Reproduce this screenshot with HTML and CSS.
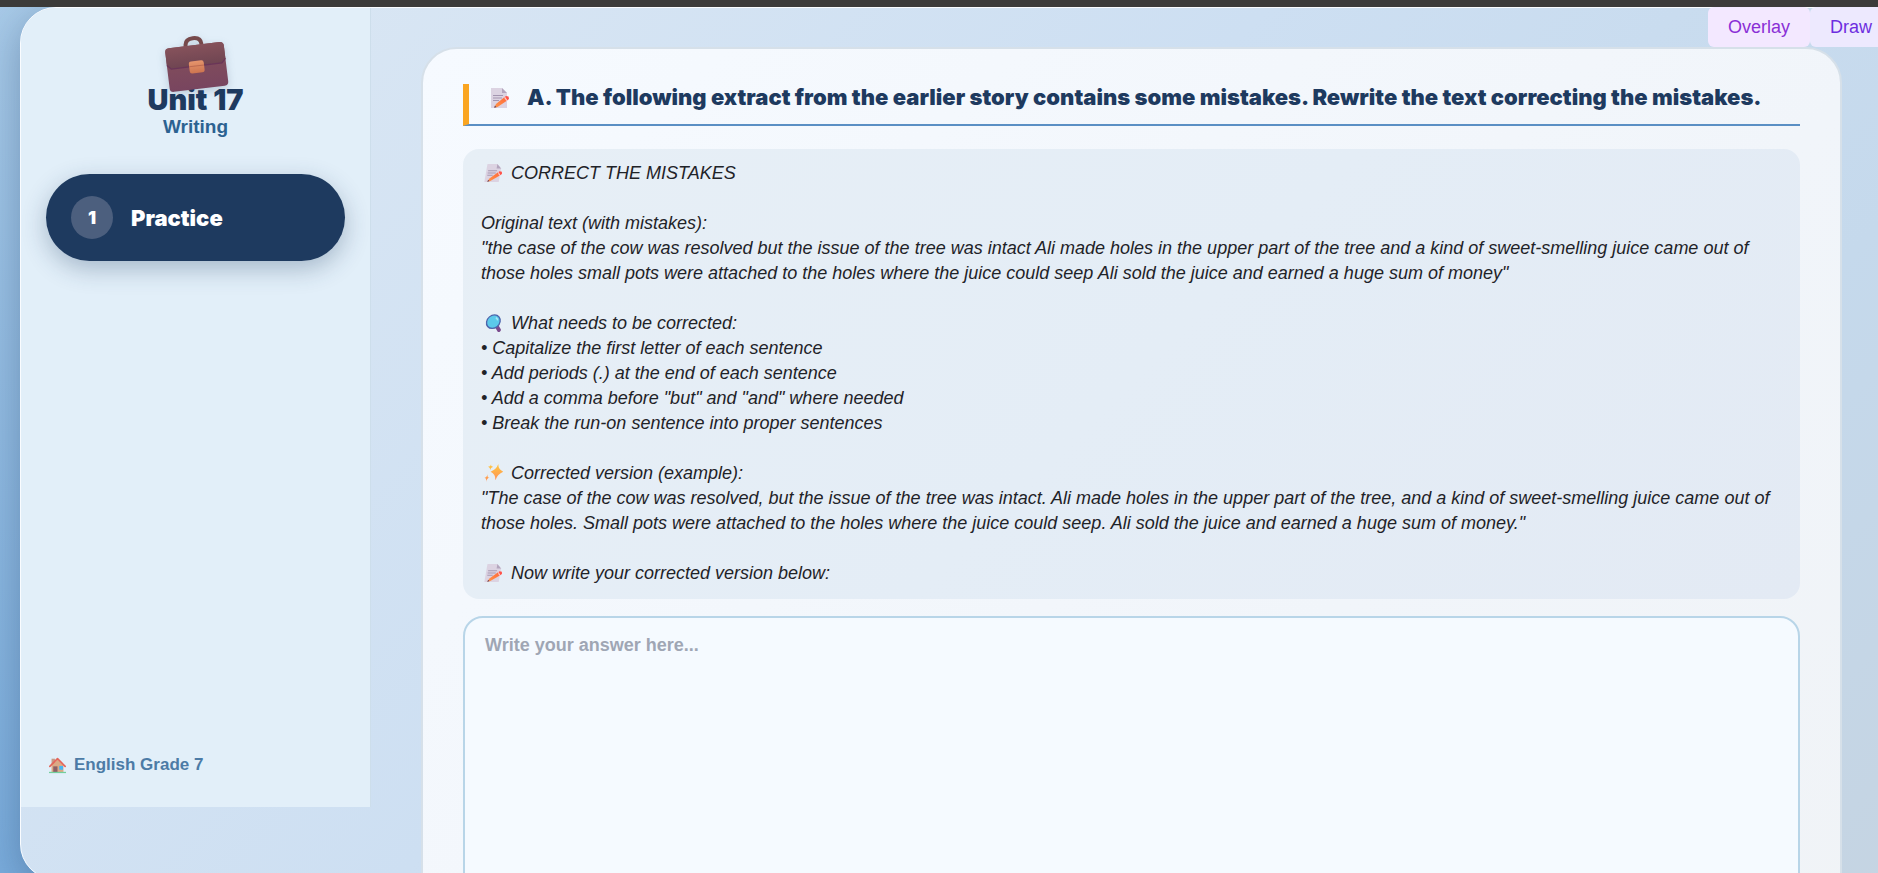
FILE: index.html
```html
<!DOCTYPE html>
<html lang="en">
  <head>
    <meta charset="UTF-8">
    <meta name="viewport" content="width=device-width, initial-scale=1">
    <title>Unit 17 - Writing</title>
    <link rel="stylesheet" href="styles.css">
  </head>
  <body>
    <!-- shared icons -->
    <svg class="defs" width="0" height="0" aria-hidden="true">
      <defs>
        <linearGradient id="flap" x1="0" y1="0" x2="0" y2="1">
          <stop offset="0" stop-color="#86525b"/>
          <stop offset="1" stop-color="#6f4552"/>
        </linearGradient>
        <linearGradient id="case" x1="0" y1="0" x2="0" y2="1">
          <stop offset="0" stop-color="#85505a"/>
          <stop offset="1" stop-color="#78455f"/>
        </linearGradient>
        <linearGradient id="clasp" x1="0" y1="0" x2="0" y2="1">
          <stop offset="0" stop-color="#e5946c"/>
          <stop offset="1" stop-color="#cd7550"/>
        </linearGradient>
        <linearGradient id="star" x1="0" y1="0" x2="0" y2="1">
          <stop offset="0" stop-color="#ffc840"/>
          <stop offset="1" stop-color="#ff9258"/>
        </linearGradient>
        <linearGradient id="pen" x1="1" y1="0" x2="0" y2="1">
          <stop offset="0" stop-color="#ff6a3c"/>
          <stop offset="1" stop-color="#ff9648"/>
        </linearGradient>
        <symbol id="memo" viewBox="0 0 18 20">
          <path fill="#dcd3e2" d="M0 0h11l5 5v15H0z"/>
          <path fill="#b3a5bd" d="M11 0l5 5h-5z"/>
          <path stroke="#a395b0" d="M2 7.500h10M2 10h9M2 12.500h6"/>
          <path fill="url(#pen)" d="M13 9.500l2.500 3.500-9 6-3 .5 1.500-3.500z"/>
          <path fill="#ff5148" d="M13 9.500l2-1.500 2.500.5.500 2.500-2.500 2z"/>
          <path fill="#ffd3c4" d="M13.200 9.400l.8-.6 2.300 3.500-.8.700z"/>
          <path fill="#6d4252" d="M4 17.500l1.500 1.800-2.500.5z"/>
        </symbol>
        <symbol id="lens" viewBox="0 0 20 20">
          <path stroke="#7b4a8d" stroke-width="4" stroke-linecap="round" d="M14 14l3 4"/>
          <circle cx="9" cy="8.500" r="7.500" fill="#5bc9ea" stroke="#4c65ac" stroke-width="1.500"/>
          <path fill="none" stroke="#a8e8f6" stroke-width="1.500" d="M11 4q2 1 2.500 3"/>
        </symbol>
        <symbol id="sparkles" viewBox="0 0 20 20">
          <path fill="url(#star)" d="M13 0q1 6 7 8.500-6 2.500-7 9.500-1-7-7-9.500 6-2.500 7-8.500z"/>
          <path fill="url(#star)" d="M5 0q0 3 3 3-3 1-3 4 0-3-3-4 3 0 3-3zM3 11q0 4 3 4-3 1-3 5 0-4-3-5 3 0 3-4z"/>
        </symbol>
        <symbol id="house" viewBox="0 0 20 18">
          <path fill="#c79a86" d="M3 1h4v7H3z"/>
          <path fill="#dba985" d="M3 9l7-7 7 7v8H3z"/>
          <path fill="none" stroke="#e4655a" stroke-width="2" stroke-linecap="round" stroke-linejoin="round" d="M1 10l9-9 9 9"/>
          <path fill="#8c6067" d="M5 10h5v7H5z"/>
          <path fill="#48b6f2" d="M12 9.500h4.500V14H12z"/>
          <path stroke="#72cf9c" stroke-width="1.500" d="M0 17.200h20"/>
        </symbol>
      </defs>
    </svg>

    <div class="app">
      <aside class="sidebar">
        <header class="unit">
          <svg class="briefcase" viewBox="0 0 68 60" aria-hidden="true">
            <g transform="rotate(-7 34 30)">
              <path fill="none" stroke="#76494b" stroke-width="4" d="M26 12v-2q0-7 8-7t8 7v2"/>
              <rect x="5" y="10" width="59" height="44" rx="4" fill="url(#case)"/>
              <path fill="url(#flap)" d="M9 10h51q4 0 4 4v13l-4 4H9l-4-4V14q0-4 4-4z"/>
              <path fill="none" stroke="#6a3558" stroke-width="1.200" d="M5 27l4 4h51l4-4"/>
              <rect x="27" y="26" width="15" height="12" rx="2.500" fill="url(#clasp)"/>
              <path stroke="#bd6a50" d="M27 31h15"/>
            </g>
          </svg>
          <h1>Unit 17</h1>
          <p>Writing</p>
        </header>
        <nav>
          <button type="button" class="nav-item">
            <span class="num">1</span>
            <span>Practice</span>
          </button>
        </nav>
        <a href="#" class="home">
          <svg aria-hidden="true"><use href="#house"/></svg>
          English Grade 7
        </a>
      </aside>

      <main>
        <section class="card">
          <h2><svg class="icon" aria-hidden="true"><use href="#memo"/></svg><span>A. The following extract from the earlier story contains some mistakes. Rewrite the text correcting the mistakes.</span></h2>

          <div class="passage">
            <p><svg class="icon" aria-hidden="true"><use href="#memo"/></svg>CORRECT THE MISTAKES</p>
            <p>Original text (with mistakes):<br>
            "the case of the cow was resolved but the issue of the tree was intact Ali made holes in the upper part of the tree and a kind of sweet-smelling juice came out of those holes small pots were attached to the holes where the juice could seep Ali sold the juice and earned a huge sum of money"</p>
            <p><svg class="icon" aria-hidden="true"><use href="#lens"/></svg>What needs to be corrected:<br>
            • Capitalize the first letter of each sentence<br>
            • Add periods (.) at the end of each sentence<br>
            • Add a comma before "but" and "and" where needed<br>
            • Break the run-on sentence into proper sentences</p>
            <p><svg class="icon" aria-hidden="true"><use href="#sparkles"/></svg>Corrected version (example):<br>
            "The case of the cow was resolved, but the issue of the tree was intact. Ali made holes in the upper part of the tree, and a kind of sweet-smelling juice came out of those holes. Small pots were attached to the holes where the juice could seep. Ali sold the juice and earned a huge sum of money."</p>
            <p><svg class="icon" aria-hidden="true"><use href="#memo"/></svg><label for="answer">Now write your corrected version below:</label></p>
          </div>

          <textarea id="answer" rows="16" placeholder="Write your answer here..."></textarea>
        </section>
      </main>
    </div>

    <div class="tools">
      <button type="button" class="overlay">Overlay</button>
      <button type="button" class="draw">Draw</button>
    </div>
  </body>
</html>
```
FILE: styles.css
```css
* {
  box-sizing: border-box;
}
body {
  margin: 0;
  height: 100vh;
  overflow: hidden;
  border-top: 7px solid #3c3b3a;
  background: linear-gradient(180deg, #a8cae8, #7aacdc);
  color: #1f2328;
  font-family: 'Liberation Sans', Arial, sans-serif;
  font-size: 18px;
}
h1, h2, p {
  margin: 0;
}
button {
  border: 0;
  font: inherit;
  cursor: pointer;
}
.defs {
  position: absolute;
}

/* the panel runs past the right edge of the window */
.app {
  display: flex;
  align-items: flex-start;
  height: 100vh;
  margin: 0 -40px 0 20px;
  border: 1px solid #fafcff;
  border-radius: 36px;
  background: linear-gradient(135deg, #dce8f4, #cddff2 45%, #c5d9ec 75%, #c5d4e2);
  box-shadow: 0 10px 40px rgba(30, 58, 95, .35);
}

.sidebar {
  display: flex;
  flex-direction: column;
  flex: 0 0 350px;
  min-height: calc(100vh - 74px);
  padding: 27px 25px 29px;
  border-right: 1px solid #cddeeb;
  border-radius: 35px 0 0 0;
  background: #e2eff9;
}
.unit {
  text-align: center;
  margin-bottom: 36px;
}
.briefcase {
  display: block;
  position: relative;
  width: 68px;
  height: 60px;
  margin: 0 auto -11px;
  filter: drop-shadow(0 3px 4px rgba(30, 58, 95, .2));
}
.unit h1 {
  color: #1e3a5f;
  font-family: Inter, 'Arial Black', sans-serif;
  font-size: 29px;
  font-weight: 900;
  line-height: 32px;
}
.unit p {
  color: #2c6291;
  font-size: 19px;
  font-weight: bold;
  line-height: 22px;
}
.nav-item {
  display: flex;
  align-items: center;
  gap: 18px;
  width: 100%;
  padding: 22px 25px;
  border-radius: 44px;
  background: #1e3a5f;
  box-shadow: 0 8px 24px rgba(30, 58, 95, .3);
  color: #fff;
  font-family: Inter, 'Arial Black', sans-serif;
  font-size: 22px;
  font-weight: 900;
}
.num {
  width: 42px;
  border-radius: 50%;
  background: #4c5f7e;
  font-size: 18px;
  line-height: 43px;
}
.home {
  display: flex;
  align-items: center;
  gap: 8px;
  margin-top: auto;
  padding: 3px;
  color: #4c7ba6;
  font-size: 17px;
  font-weight: bold;
  line-height: 20px;
  text-decoration: none;
}
.home svg {
  width: 17px;
  height: 17px;
}

main {
  flex: 1;
  padding: 39px 75px 40px 50px;
}
.card {
  padding: 35px 40px;
  border: 2px solid #d6e0e9;
  border-radius: 36px;
  background: linear-gradient(135deg, #f6faff, #f1f5fa 60%, #f0f3f6);
}
.icon {
  width: 18px;
  height: 18px;
  margin: 0 8px 0 4px;
  vertical-align: -3px;
}
.passage .icon {
  transform: skewX(-10deg);
}
h2 {
  display: flex;
  align-items: center;
  padding: 0 18px 13px;
  border-left: 6px solid #faa521;
  border-bottom: 2px solid #5a8fc4;
  color: #1e3a5f;
  font-family: Inter, 'Arial Black', sans-serif;
  font-size: 22px;
  font-weight: 900;
  line-height: 27px;
}
h2 .icon {
  flex: none;
  height: 20px;
  margin-right: 18px;
}
.passage {
  margin: 23px 0 17px;
  padding: 12px 18px 13px;
  border-radius: 16px;
  background: linear-gradient(135deg, #e7eff6, #e4edf6 50%, #e3eaf4);
  font-style: italic;
  line-height: 25px;
}
.passage p + p {
  margin-top: 25px;
}
textarea {
  display: block;
  width: 100%;
  padding: 15px 20px;
  border: 2px solid #b8d5e8;
  border-radius: 20px;
  background: #f5faff;
  color: #1e3a5f;
  font: bold 18px/25px 'Liberation Sans', Arial, sans-serif;
  resize: none;
}
textarea::placeholder {
  color: #9fa6b4;
}

.tools {
  position: absolute;
  top: 7px;
  right: -14px;
  display: flex;
}
.tools button {
  padding: 0 20px;
  border-radius: 6px;
  line-height: 40px;
}
.tools .overlay {
  background: #f3e8ff;
  color: #8a2fd6;
}
.tools .draw {
  background: #ede9fe;
  color: #6d2ee0;
}
```
